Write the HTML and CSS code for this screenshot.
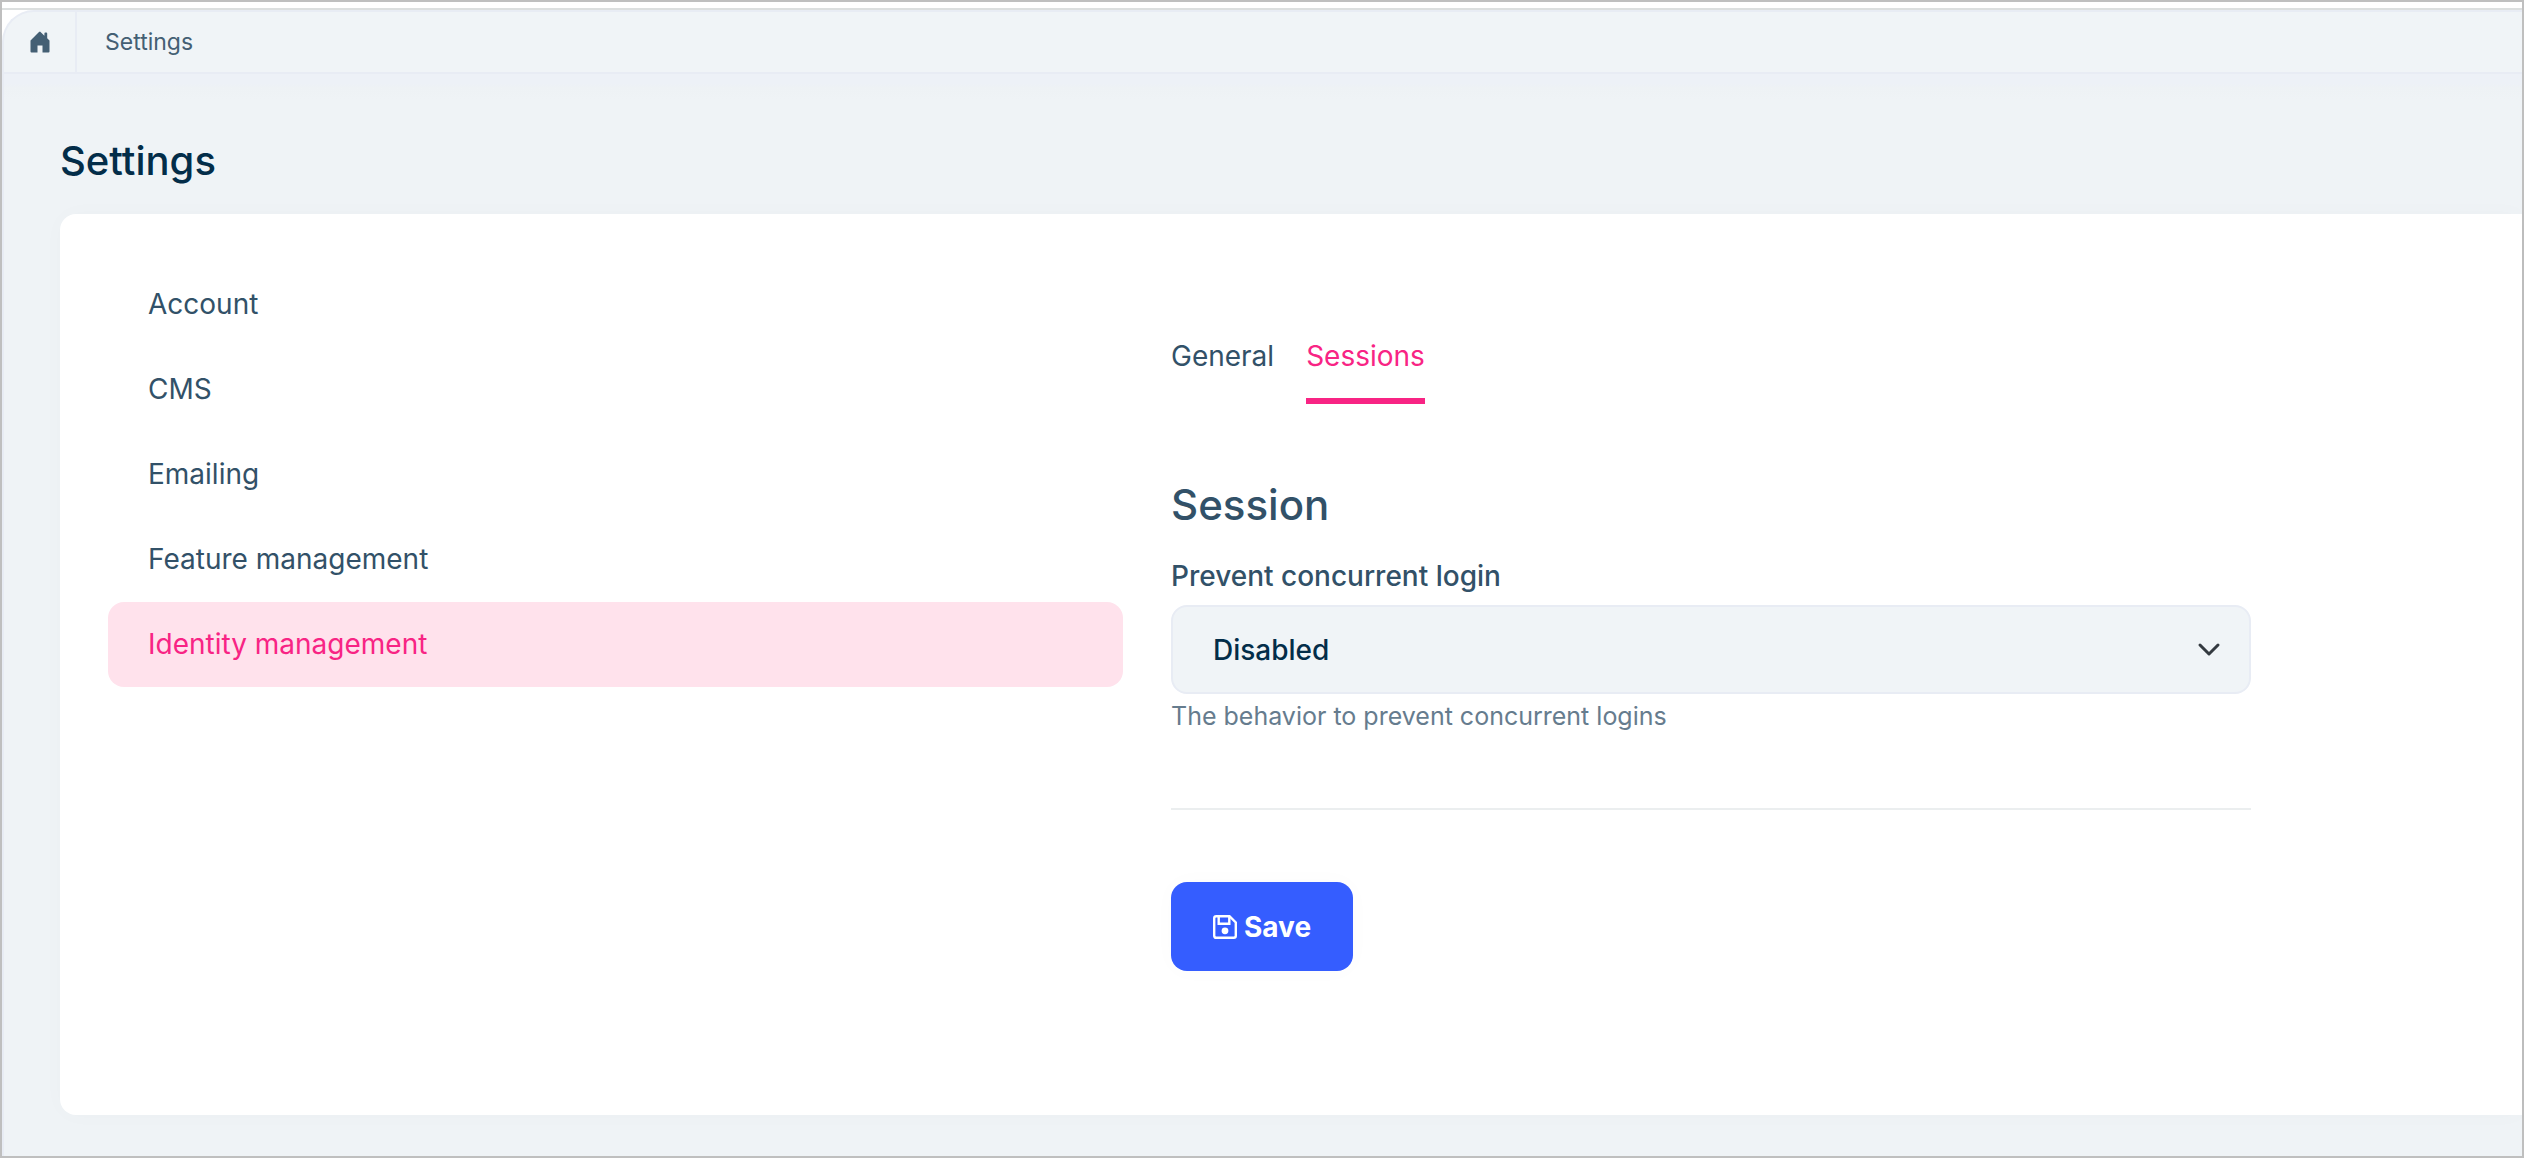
FILE: index.html
```html
<!DOCTYPE html>
<html lang="en">
<head>
<meta charset="utf-8">
<title>Settings</title>
<meta name="viewport" content="width=device-width, initial-scale=1">
<link rel="stylesheet" href="styles.css">
</head>
<body>
<div class="window">
  <div class="shell">
    <nav class="topbar" aria-label="Breadcrumb">
      <a class="home" href="#" aria-label="Home">
        <svg class="home-icon" viewBox="0 0 20 22" aria-hidden="true"><path d="M10 0.6 14.4 4.8V2.4Q14.4 1.4 15.4 1.4H16.2Q17.2 1.4 17.2 2.400V7.300L19.500 9.600V20.500Q19.500 21.500 18.500 21.500H12.500V14.500H7.500V21.500H1.500Q0.500 21.500 0.500 20.500V9.600L9 1.100Q9.500 0.600 10 0.600Z"/></svg>
      </a>
      <a class="crumb" href="#">Settings</a>
    </nav>
    <main class="page">
      <h1 class="page-title">Settings</h1>
      <section class="card">
        <nav class="side-nav" aria-label="Settings groups">
          <a class="side-link" href="#">Account</a>
          <a class="side-link" href="#">CMS</a>
          <a class="side-link" href="#">Emailing</a>
          <a class="side-link" href="#">Feature management</a>
          <a class="side-link active" href="#" aria-current="page">Identity management</a>
        </nav>
        <div class="content">
          <div class="tabs">
            <a class="tab" href="#">General</a>
            <a class="tab active" href="#">Sessions</a>
          </div>
          <form class="form">
            <h2 class="form-title">Session</h2>
            <label class="label" for="prevent">Prevent concurrent login</label>
            <div class="select-wrap">
              <select class="select" id="prevent" aria-describedby="prevent-help">
                <option>Disabled</option>
              </select>
              <svg class="chevron" viewBox="0 0 24 24" aria-hidden="true"><path d="m3 7 9 9 9-9"/></svg>
            </div>
            <p class="help" id="prevent-help">The behavior to prevent concurrent logins</p>
            <hr class="rule">
            <button class="save" type="button">
              <svg class="save-icon" viewBox="0 0 24 24" aria-hidden="true"><path d="M3.200 1.200H16.500l6.300 6.300v13.300q0 2-2 2H3.200q-2 0-2-2V3.200q0-2 2-2Z"/><path d="M5.700 1.200v7.600h10.600V1.200"/><circle cx="12" cy="15.800" r="3.400"/></svg>
              <span>Save</span>
            </button>
          </form>
        </div>
      </section>
    </main>
  </div>
</div>
</body>
</html>
```
FILE: styles.css
```css
* {
  box-sizing: border-box;
}

body {
  margin: 0;
  font-family: Inter, "Liberation Sans", sans-serif;
  font-size: 28px;
  line-height: 42px;
  color: #325168;
  background: #fff;
}

a {
  color: inherit;
  text-decoration: none;
}

.window {
  display: flex;
  flex-direction: column;
  min-height: 100vh;
  padding-top: 6px;
  border: 2px solid #bfbfbf;
}

.shell {
  display: flex;
  flex: 1;
  flex-direction: column;
  border-top: 2px solid #dcdfdf;
}

.topbar {
  display: flex;
  height: 64px;
  border: 2px solid #e8ecf4;
  border-right: 0;
  border-radius: 32px 0 0 0;
  background: #f0f4f7;
  font-size: 23px;
  color: #445f74;
}

.home {
  display: flex;
  align-items: center;
  justify-content: center;
  width: 73px;
  border-right: 2px solid #e8ecf4;
}

.home-icon {
  width: 20px;
  height: 22px;
  fill: currentColor;
}

.crumb {
  align-self: center;
  padding-left: 28px;
}

.page {
  flex: 1;
  padding: 60px 0 41px 56px;
  border-left: 2px solid #e8ecf4;
  background: linear-gradient(#edf1f7, #edf1f7 10px, #eef2f5 14px, #eff3f6 26px, #eff3f6);
}

.page-title {
  margin: 0 0 27px;
  font-size: 40px;
  font-weight: 500;
  line-height: 53px;
  color: #032d49;
}

.card {
  display: grid;
  grid-template-columns: 1015fr 1351fr;
  gap: 48px;
  padding: 48px 0 144px 48px;
  border-radius: 16px 0 0 16px;
  background: #fff;
  box-shadow: 0 0 24px rgba(76, 87, 125, 0.02);
}

.side-link {
  display: block;
  padding: 21px 40px 22px;
  border-radius: 16px;
}

.side-link.active {
  background: #ffe2ec;
  color: #f82484;
}

.content {
  padding-top: 48px;
}

.tabs {
  display: flex;
  gap: 32px;
}

.tab {
  padding: 25px 0 21px;
  border-bottom: 6px solid transparent;
}

.tab.active {
  border-color: #f82484;
  color: #f82484;
}

.form {
  max-width: 1080px;
  padding-top: 76px;
}

.form-title {
  margin: 0 0 25px;
  font-size: 42px;
  font-weight: 500;
  line-height: 50px;
}

.label {
  display: block;
  margin-bottom: 8px;
  font-weight: 500;
}

.select-wrap {
  display: grid;
  align-items: center;
}

.select {
  grid-area: 1 / 1;
  width: 100%;
  height: 89px;
  padding: 0 40px;
  border: 2px solid #e8ecf4;
  border-radius: 16px;
  appearance: none;
  background: #f0f4f7;
  color: #032d49;
  font: inherit;
  font-weight: 500;
}

.chevron {
  grid-area: 1 / 1;
  justify-self: end;
  width: 24px;
  height: 24px;
  margin-right: 30px;
  fill: none;
  stroke: #343a40;
  stroke-width: 3;
  stroke-linecap: round;
  stroke-linejoin: round;
  pointer-events: none;
}

.help {
  margin: 4px 0 0;
  font-size: 25px;
  line-height: 36px;
  color: #667c8e;
}

.rule {
  margin: 74px 0 72px;
  border: 0;
  border-top: 2px solid #ebeeef;
}

.save {
  display: flex;
  align-items: center;
  gap: 7px;
  height: 89px;
  padding: 0 42px;
  border: 0;
  border-radius: 16px;
  background: #355dff;
  color: #fff;
  font: inherit;
  font-weight: 700;
  box-shadow: 0 0 24px rgba(0, 0, 0, 0.02);
}

.save-icon {
  width: 24px;
  height: 24px;
  fill: none;
  stroke: currentColor;
  stroke-width: 2.4;
}

.save-icon circle {
  fill: currentColor;
  stroke: none;
}
```
